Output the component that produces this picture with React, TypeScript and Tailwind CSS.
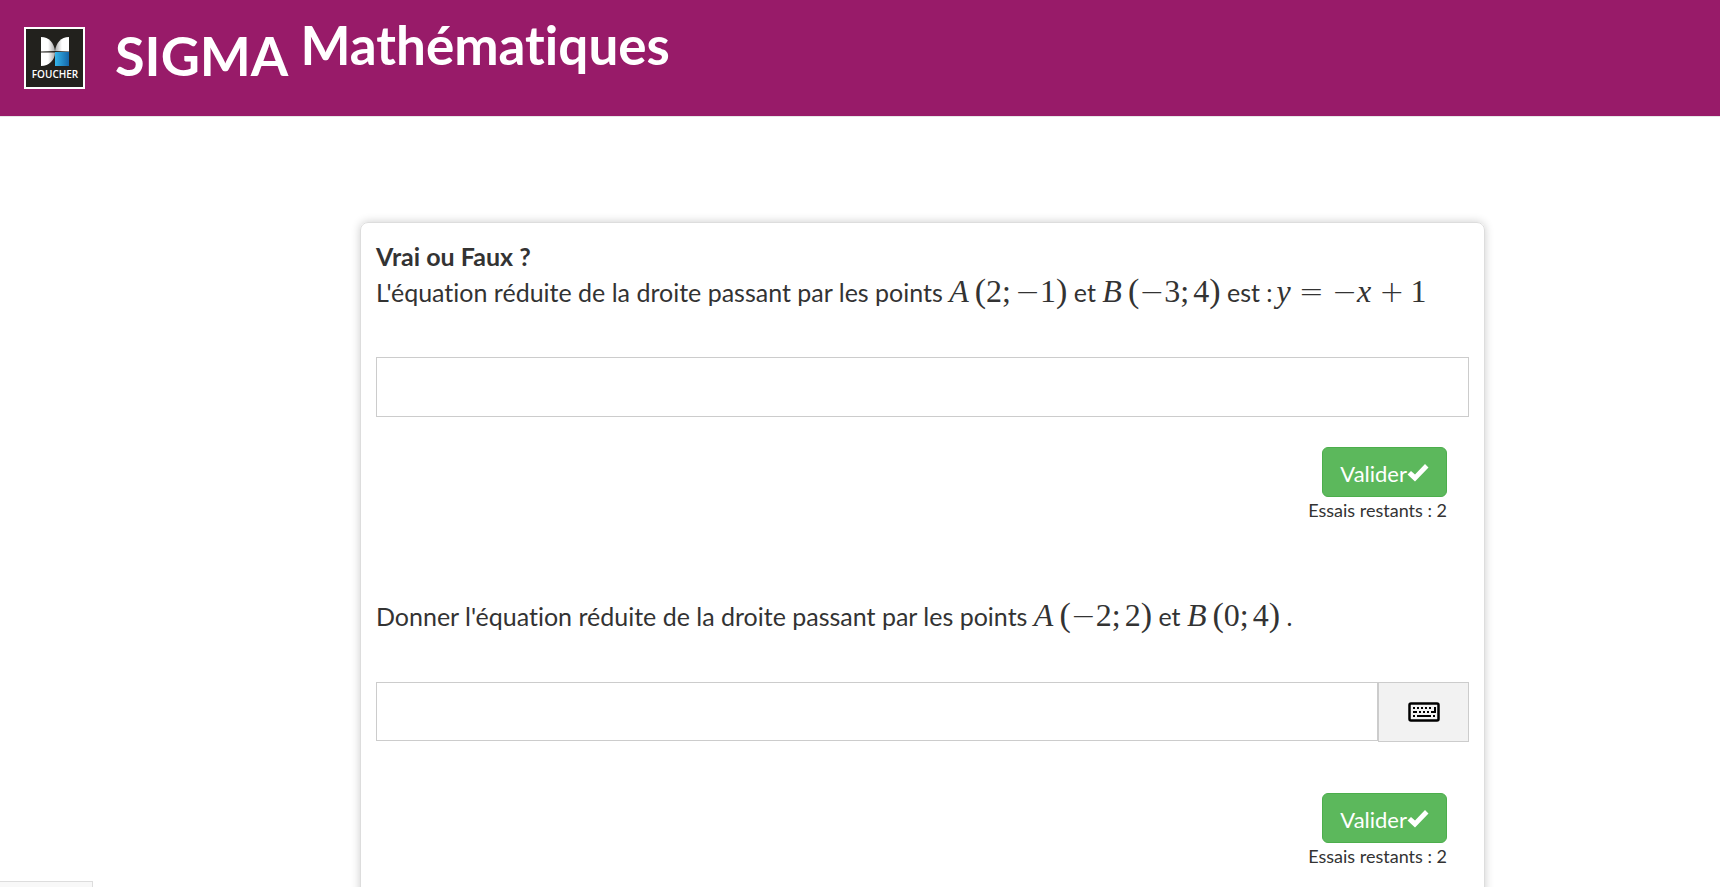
import type { ReactNode } from 'react';

function FoucherLogo() {
  return (
    <svg viewBox="0 0 61 62" className="h-[62px] w-[61px] shrink-0" role="img" aria-label="Foucher">
      <defs>
        <linearGradient id="wing-left" x1="0" x2="1">
          <stop offset="0.5" stopColor="#ffffff" />
          <stop offset="1" stopColor="#a8a8a8" />
        </linearGradient>
        <linearGradient id="wing-right" x1="0" x2="1">
          <stop offset="0" stopColor="#a8a8a8" />
          <stop offset="0.5" stopColor="#ffffff" />
        </linearGradient>
        <linearGradient id="blue" x1="0" x2="1">
          <stop offset="0" stopColor="#35b6ea" />
          <stop offset="1" stopColor="#1465a8" />
        </linearGradient>
      </defs>
      <rect x="1" y="1" width="59" height="60" fill="#22211d" stroke="#ffffff" strokeWidth="2" />
      <path d="M17 10C25 10 30 16 31 24L17 24.500Z" fill="url(#wing-left)" />
      <path d="M45 10C37 10 32 16 31 24L45 24.500Z" fill="url(#wing-right)" />
      <path d="M17 25.500H31C31 33 25 39 17 39Z" fill="url(#wing-left)" />
      <rect x="31" y="25" width="14" height="14" fill="url(#blue)" />
      <text x="31" y="51" textAnchor="middle" fontSize="10" fontWeight="600" fontFamily="Open Sans, sans-serif" fill="#ffffff">
        FOUCHER
      </text>
    </svg>
  );
}

function CheckIcon() {
  return (
    <svg viewBox="0 0 22 20" className="h-5 w-[22px]" fill="currentColor" aria-hidden="true">
      <path d="M0.500 11.500L4 8L8 11.500L18 1L21.500 4.500L8 18.500Z" />
    </svg>
  );
}

function KeyboardIcon() {
  return (
    <svg viewBox="0 0 32 20" className="h-5 w-8" aria-hidden="true">
      <rect x="1.500" y="1.500" width="29" height="17" rx="1.500" fill="#f2f2f2" stroke="#000000" strokeWidth="2.500" />
      <path d="M5 6H24" stroke="#000000" strokeWidth="2" strokeDasharray="2 2" />
      <path d="M5 10H9M11 10h2M15 10h2M19 10h2M23 10H28M27 5V11M5 14h2M9 14H23M25 14h2" stroke="#000000" strokeWidth="2" fill="none" />
    </svg>
  );
}

function Formula({ children }: { children: ReactNode }) {
  return <span className="font-['Liberation_Serif',serif] text-[32px] leading-none whitespace-nowrap">{children}</span>;
}

// Operators use a light sans face: its signs are as wide as in typeset maths
function Op({ children }: { children: ReactNode }) {
  return <span className="font-['DejaVu_Sans',sans-serif] text-[30px] leading-none font-extralight">{children}</span>;
}

function Paren({ children }: { children: ReactNode }) {
  return <span className="text-[34px] leading-none">{children}</span>;
}

function Coord({ value }: { value: number }) {
  return (
    <>
      {value < 0 && <Op>−</Op>}
      {Math.abs(value)}
    </>
  );
}

function Point({ name, x, y }: { name: string; x: number; y: number }) {
  return (
    <Formula>
      <i className="mr-1.5">{name}</i>
      <Paren>(</Paren>
      <Coord value={x} />
      <span className="mr-1">;</span>
      <Coord value={y} />
      <Paren>)</Paren>
    </Formula>
  );
}

function Validate({ tries }: { tries: number }) {
  return (
    <div className="flex flex-col items-end pr-[22px]">
      <button
        type="button"
        className="flex h-[50px] items-center rounded-md border border-[#4cae4c] bg-[#5cb85c] px-[17px] pt-0.5 text-[22px] text-white hover:bg-[#449d44]"
      >
        Valider
        <CheckIcon />
      </button>
      <p className="text-lg leading-[26px]">Essais restants : {tries}</p>
    </div>
  );
}

export default function App() {
  return (
    <div className="flex h-screen flex-col overflow-hidden bg-white font-['Lato',sans-serif] text-[#333333] [font-variant-ligatures:none]">
      <header className="flex h-[117px] shrink-0 items-start border-b border-[#e7e7e7] bg-[#981b69] px-6 text-white">
        <div className="pt-[27px]">
          <FoucherLogo />
        </div>
        <span className="ml-[30px] pt-[26px] text-[54px] leading-[60px] font-bold">SIGMA</span>
        <h1 className="ml-3 pt-[15px] text-[53px] leading-[60px] font-bold">Mathématiques</h1>
      </header>

      <div className="shrink-0 pt-[105px] xl:pl-[125px]">
        <main className="mx-auto w-[1125px] max-w-full rounded-lg border border-[#dddddd] px-[15px] pt-[15px] pb-20 shadow-[0_0_10px_rgba(0,0,0,0.2)]">
          <form onSubmit={(e) => e.preventDefault()}>
            <label htmlFor="answer-1" className="block text-[25px] leading-9">
              <strong className="block">Vrai ou Faux ?</strong>
              L'équation réduite de la droite passant par les points <Point name="A" x={2} y={-1} /> et{' '}
              <Point name="B" x={-3} y={4} /> est :
              <Formula>
                <i className="mr-2 ml-1">y</i>
                <Op>=</Op>
                <span className="ml-2">
                  <Op>−</Op>
                </span>
                <i className="mr-2">x</i>
                <Op>+</Op>
                <span className="ml-1.5">1</span>
              </Formula>
            </label>
            <input id="answer-1" type="text" className="mt-[47px] mb-[30px] block h-[60px] w-full border border-[#cccccc] px-3 text-[25px]" />
            <Validate tries={2} />
          </form>

          <form className="mt-[75px]" onSubmit={(e) => e.preventDefault()}>
            <label htmlFor="answer-2" className="block text-[25px] leading-9">
              Donner l'équation réduite de la droite passant par les points <Point name="A" x={-2} y={2} /> et{' '}
              <Point name="B" x={0} y={4} /> .
            </label>
            <div className="mt-12 mb-[51px] flex items-start">
              <input id="answer-2" type="text" className="h-[59px] min-w-0 flex-1 border border-[#cccccc] px-3 text-[25px]" />
              <button
                type="button"
                aria-label="Clavier"
                className="flex h-[60px] w-[91px] items-center justify-center border border-[#cccccc] bg-[#f2f2f2]"
              >
                <KeyboardIcon />
              </button>
            </div>
            <Validate tries={2} />
          </form>
        </main>
      </div>

      <div className="fixed bottom-0 left-0 h-1.5 w-[93px] border-t border-r border-[#dddddd] bg-[#f8f8f8]" />
    </div>
  );
}
